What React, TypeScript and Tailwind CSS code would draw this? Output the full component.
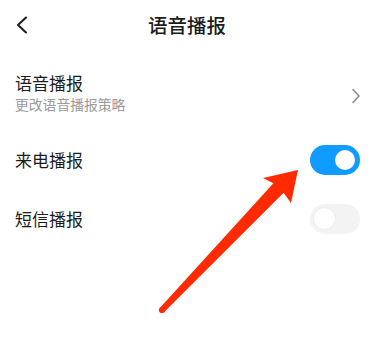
import React from "react";

function Toggle({ on }: { on: boolean }) {
    if (on) {
        return (
            <div className="flex h-[30px] w-[50px] items-center justify-end rounded-full bg-[#0f9bff] pr-[5px]">
                <div className="h-[20px] w-[20px] rounded-full bg-white" />
            </div>
        );
    }
    return (
        <div className="flex h-[30px] w-[50px] items-center rounded-full bg-[#f3f3f3] pl-[3px]">
            <div className="h-[23px] w-[23px] rounded-full border border-[#ececec] bg-white" />
        </div>
    );
}

export default function App() {
    return (
        <div
            className="relative h-[351px] w-[374px] overflow-hidden bg-white text-[#1c1c1c]"
            style={{ fontFamily: '"Noto Sans CJK SC", "Noto Sans", sans-serif' }}
        >
            {/* header */}
            <div className="grid h-[50px] grid-cols-[1fr_auto_1fr] items-center">
                <div className="pl-[15px]">
                    <svg width="14" height="18" viewBox="0 0 14 18" fill="none">
                        <path d="M11 1.5 L3 9 L11 16.5" stroke="#1c1c1c" strokeWidth="2" strokeLinecap="round" strokeLinejoin="round" />
                    </svg>
                </div>
                <div className="text-[19.5px] font-medium leading-none">语音播报</div>
                <div />
            </div>

            {/* rows */}
            <div className="flex items-center justify-between pl-[15px] pr-[13px] pt-[22px] pb-[17px]">
                <div className="flex flex-col">
                    <div className="text-[17px] leading-[22px]">语音播报</div>
                    <div className="mt-[1px] text-[13.8px] leading-[18px] text-[#9a9a9a]">更改语音播报策略</div>
                </div>
                <svg width="10" height="16" viewBox="0 0 10 16" fill="none" className="mt-[6px]">
                    <path d="M2 1.5 L8 8 L2 14.5" stroke="#8a8a8a" strokeWidth="1.6" strokeLinecap="round" strokeLinejoin="round" />
                </svg>
            </div>

            <div className="flex h-[59px] items-center justify-between pl-[15px] pr-[14px]">
                <div className="text-[17px] leading-[22px]">来电播报</div>
                <Toggle on />
            </div>

            <div className="flex h-[59px] items-center justify-between pl-[15px] pr-[14px]">
                <div className="text-[17px] leading-[22px]">短信播报</div>
                <Toggle on={false} />
            </div>

            {/* annotation arrow */}
            <svg className="pointer-events-none absolute left-0 top-0" width="374" height="351" viewBox="0 0 374 351">
                <polygon
                    points="273.4,183.2 263,178 298,170 291,203 283.6,192.8 164.2,312.1 159.8,307.9"
                    fill="#ff2a00"
                />
                <circle cx="162" cy="310" r="3.1" fill="#ff2a00" />
            </svg>
        </div>
    );
}
